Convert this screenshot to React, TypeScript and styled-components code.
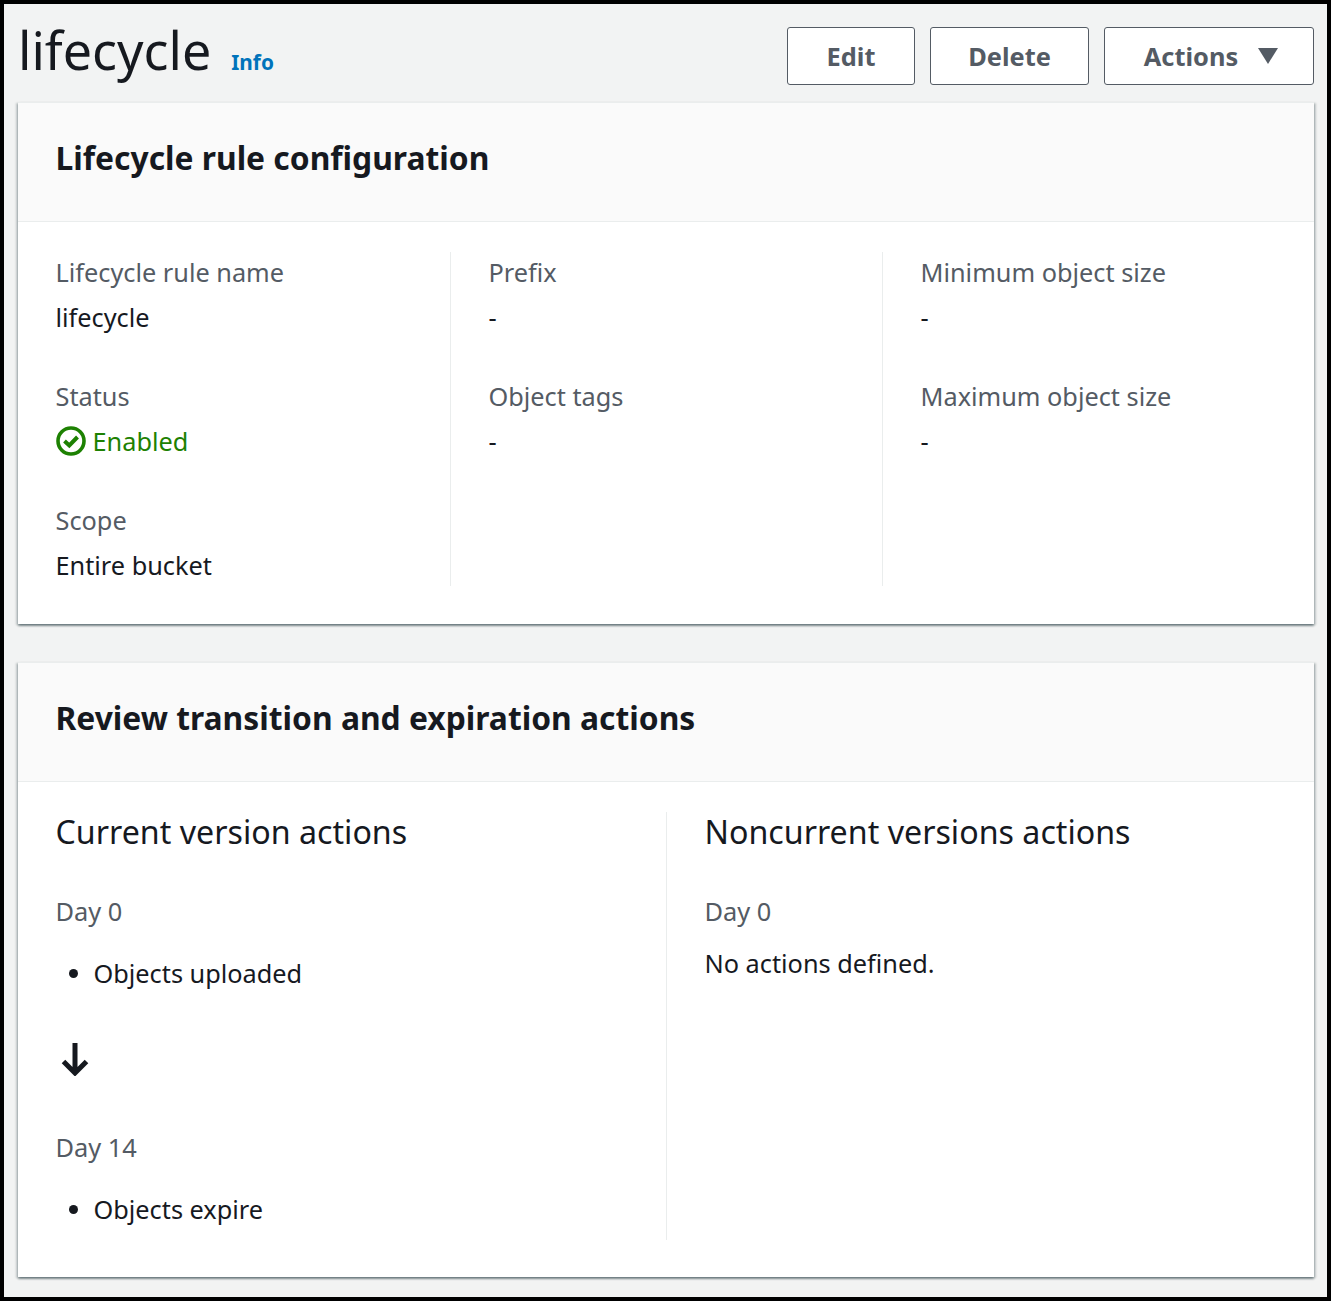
import React from 'react'
import styled, { createGlobalStyle } from 'styled-components'

const GlobalStyle = createGlobalStyle`
  html, body {
    margin: 0;
    padding: 0;
    background: #f2f3f3;
  }
  body {
    font-family: 'Noto Sans', 'Open Sans', sans-serif;
    color: #16191f;
  }
`

const Frame = styled.div`
  box-sizing: border-box;
  width: 1331px;
  height: 1301px;
  border: 4px solid #000;
  background: #f2f3f3;
  padding: 0 13px 0 14px;
  overflow: hidden;
`

const PageHeader = styled.header`
  display: flex;
  align-items: flex-start;
  justify-content: space-between;
  height: 98px;
`

const TitleGroup = styled.div`
  display: flex;
  align-items: baseline;
  height: 92px;
`

const PageTitle = styled.h1`
  margin: 0;
  font-size: 52px;
  line-height: 92px;
  font-weight: 400;
  color: #16191f;
`

const InfoLink = styled.a`
  margin-left: 20px;
  font-size: 20.800px;
  font-weight: 700;
  color: #0073bb;
`

const Buttons = styled.div`
  display: flex;
  gap: 15px;
  padding-top: 23px;
`

const Button = styled.button<{ $width: number }>`
  box-sizing: border-box;
  width: ${(p) => p.$width}px;
  height: 58px;
  display: flex;
  align-items: center;
  justify-content: center;
  gap: 20px;
  background: #fff;
  border: 1px solid #545b64;
  border-radius: 3px;
  color: #545b64;
  font-family: inherit;
  font-size: 25.4px;
  font-weight: 700;
  padding: 0 0 1px;
`

const Caret = styled.svg`
  margin-right: -4px;
`

const Card = styled.section<{ $height: number }>`
  box-sizing: border-box;
  height: ${(p) => p.$height}px;
  background: #fff;
  box-shadow: 0 2px 2px 0 rgba(0, 28, 36, 0.4), 2px 1px 2px 0 rgba(0, 28, 36, 0.18),
    -2px 1px 2px 0 rgba(0, 28, 36, 0.18);
  border-top: 1px solid #eaeded;
`

const CardHeader = styled.div`
  box-sizing: border-box;
  height: 119px;
  display: flex;
  align-items: center;
  padding: 0 37px 8px 37.500px;
  background: #fafafa;
  border-bottom: 1px solid #eaeded;
`

const CardTitle = styled.h2`
  margin: 0;
  font-size: 31.8px;
  line-height: 42px;
  font-weight: 700;
`

const ConfigGrid = styled.div`
  display: grid;
  grid-template-columns: 433px 432px 1fr;
  padding: 30px 38px 0 0;
`

const ConfigColumn = styled.div<{ $last?: boolean }>`
  height: 334px;
  padding-left: 37.500px;
  border-right: ${(p) => (p.$last ? 'none' : '1px solid #eaeded')};
`

const Field = styled.div`
  height: 124px;
`

const Label = styled.div`
  font-size: 25.3px;
  line-height: 40px;
  height: 45px;
  color: #545b64;
`

const Value = styled.div<{ $ok?: boolean }>`
  display: flex;
  align-items: center;
  gap: 7px;
  font-size: 25.3px;
  line-height: 40px;
  color: ${(p) => (p.$ok ? '#1d8102' : '#16191f')};
`

const Gap = styled.div`
  height: 38px;
`

const ActionsGrid = styled.div`
  display: grid;
  grid-template-columns: 649px 1fr;
  padding-top: 30px;
`

const ActionsColumn = styled.div<{ $first?: boolean }>`
  height: 428px;
  padding-left: 37.500px;
  border-right: ${(p) => (p.$first ? '1px solid #eaeded' : 'none')};
`

const ColumnTitle = styled.h3`
  margin: 0;
  height: 79px;
  font-size: 32.2px;
  line-height: 39px;
  font-weight: 400;
`

const DayLabel = styled.div`
  height: 42px;
  font-size: 25.4px;
  line-height: 40px;
  color: #545b64;
`

const ActionList = styled.ul`
  margin: 0;
  padding: 20px 0 0 38px;
  font-size: 25.3px;
  line-height: 40px;
`

const Plain = styled.p`
  margin: 0;
  padding-top: 10px;
  font-size: 25.3px;
  line-height: 40px;
`

const ArrowRow = styled.div`
  box-sizing: border-box;
  display: flex;
  align-items: center;
  height: 134px;
  padding: 0 0 2px 5.500px;
`

const CheckIcon = () => (
  <svg width="30" height="30" viewBox="0 0 30 30" fill="none">
    <circle cx="15" cy="15" r="13" stroke="#1d8102" strokeWidth="3.6" />
    <path d="M8.500 15l4.800 4.500 8.200-8.500" stroke="#1d8102" strokeWidth="4" />
  </svg>
)

const CaretIcon = () => (
  <Caret width="20" height="16" viewBox="0 0 20 16">
    <path d="M0 0h20L10 16z" fill="#545b64" />
  </Caret>
)

const ArrowIcon = () => (
  <svg width="28" height="33" viewBox="0 0 28 33" fill="none">
    <path d="M14 0v29M2.500 18.500L14 30l11.500-11.500" stroke="#16191f" strokeWidth="5" />
  </svg>
)

const App: React.FC = () => {
  return (
    <Frame>
      <GlobalStyle />
      <PageHeader>
        <TitleGroup>
          <PageTitle>lifecycle</PageTitle>
          <InfoLink>Info</InfoLink>
        </TitleGroup>
        <Buttons>
          <Button $width={128}>Edit</Button>
          <Button $width={159}>Delete</Button>
          <Button $width={210}>
            Actions
            <CaretIcon />
          </Button>
        </Buttons>
      </PageHeader>

      <Card $height={522}>
        <CardHeader>
          <CardTitle>Lifecycle rule configuration</CardTitle>
        </CardHeader>
        <ConfigGrid>
          <ConfigColumn>
            <Field>
              <Label>Lifecycle rule name</Label>
              <Value>lifecycle</Value>
            </Field>
            <Field>
              <Label>Status</Label>
              <Value $ok>
                <CheckIcon />
                Enabled
              </Value>
            </Field>
            <Field>
              <Label>Scope</Label>
              <Value>Entire bucket</Value>
            </Field>
          </ConfigColumn>
          <ConfigColumn>
            <Field>
              <Label>Prefix</Label>
              <Value>-</Value>
            </Field>
            <Field>
              <Label>Object tags</Label>
              <Value>-</Value>
            </Field>
          </ConfigColumn>
          <ConfigColumn $last>
            <Field>
              <Label>Minimum object size</Label>
              <Value>-</Value>
            </Field>
            <Field>
              <Label>Maximum object size</Label>
              <Value>-</Value>
            </Field>
          </ConfigColumn>
        </ConfigGrid>
      </Card>

      <Gap />

      <Card $height={615}>
        <CardHeader>
          <CardTitle>Review transition and expiration actions</CardTitle>
        </CardHeader>
        <ActionsGrid>
          <ActionsColumn $first>
            <ColumnTitle>Current version actions</ColumnTitle>
            <DayLabel>Day 0</DayLabel>
            <ActionList>
              <li>Objects uploaded</li>
            </ActionList>
            <ArrowRow>
              <ArrowIcon />
            </ArrowRow>
            <DayLabel>Day 14</DayLabel>
            <ActionList>
              <li>Objects expire</li>
            </ActionList>
          </ActionsColumn>
          <ActionsColumn>
            <ColumnTitle>Noncurrent versions actions</ColumnTitle>
            <DayLabel>Day 0</DayLabel>
            <Plain>No actions defined.</Plain>
          </ActionsColumn>
        </ActionsGrid>
      </Card>
    </Frame>
  )
}

export default App
